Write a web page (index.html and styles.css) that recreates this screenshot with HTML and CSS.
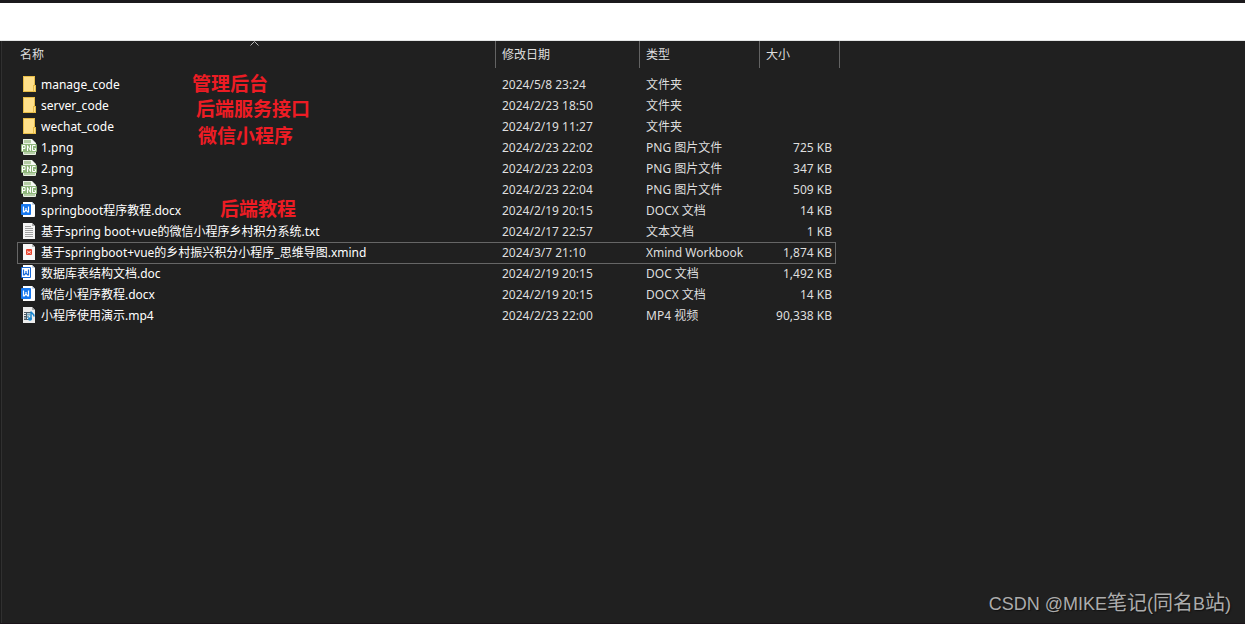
FILE: index.html
```html
<!DOCTYPE html>
<html lang="zh-CN">
<head>
<meta charset="utf-8">
<title>文件列表</title>
<link rel="stylesheet" href="styles.css">
</head>
<body>
<svg class="sprite" aria-hidden="true">
  <symbol id="folder" viewBox="0 0 16 16">
    <path d="M2 0h12v9h1v7H2z" fill="#e8bd48"/><path d="M3 1h10v14H3z" fill="#ffe08a"/><path d="M12 9h1v6h-1z" fill="#e8bd48"/><path d="M13 10h1v5h-1z" fill="#ffe08a"/>
  </symbol>
  <symbol id="png" viewBox="0 0 16 16">
    <path d="M2 0h9l4 4v11a1 1 0 0 1-1 1H3a1 1 0 0 1-1-1z" fill="#e8f0e2"/><path d="M3 1h7v3H3z" fill="#b4cda4"/><path d="M10 0l5 5h-5z" fill="#f7faf5"/>
    <rect x="0" y="5" width="16" height="8" rx="1" fill="#8fb67c"/><path d="M3 13h11v2H3z" fill="#b5cfa7"/>
    <path d="M1.500 12V6.500h2.500v3H1.500M6.500 12V6.500L9.500 11.500V6M14.500 6.500h-3v5h3v-2h-1" fill="none" stroke="#fff"/>
  </symbol>
  <symbol id="docx" viewBox="0 0 16 16">
    <path d="M2 0h9l3 3v11a1 1 0 0 1-1 1H2z" fill="#fff"/><path d="M11 0l3 3h-3z" fill="#c9d9ee"/>
    <rect x="0" y="2" width="10" height="11" rx="1" fill="#1677ef"/>
    <path d="M2.500 4.500v5.500h.8L5 8l1.700 2h.8V4.500M5 6v2" fill="none" stroke="#fff" stroke-width="1.200"/>
  </symbol>
  <symbol id="doc" viewBox="0 0 16 16">
    <path d="M2 0h9l3 3v11a1 1 0 0 1-1 1H2z" fill="#fff"/><path d="M11 0l3 3h-3z" fill="#c9d9ee"/>
    <rect x="0" y="2" width="10" height="11" rx="1" fill="#1769d8"/><rect x="1" y="3" width="8" height="9" fill="#fff"/>
    <path d="M2.500 4.500v5.500h.8L5 8l1.700 2h.8V4.500M5 6v2" fill="none" stroke="#1769d8" stroke-width="1.200"/>
  </symbol>
  <symbol id="txt" viewBox="0 0 16 16">
    <path d="M2 0h9l3 3v13H2z" fill="#f5f5f5"/><path d="M11 0l3 3h-3z" fill="#aaa"/>
    <path d="M4 3.500h6M4 5.500h8M4 7.500h8M4 9.500h8M4 11.500h8M4 13.500h8" stroke="#a2a2a2"/>
  </symbol>
  <symbol id="xmind" viewBox="0 0 16 16">
    <path d="M2 0h9l3 3v13H2z" fill="#f8f8f8"/><path d="M11 0l3 3h-3z" fill="#bbb"/>
    <rect x="5" y="5" width="6" height="6" rx="1" fill="#e9442e"/><path d="M6 7l4 2.500M6 9.500L10 7" fill="none" stroke="#fff" stroke-width=".7"/>
  </symbol>
  <symbol id="mp4" viewBox="0 0 16 16">
    <path d="M2 0h9l3 3v13H2z" fill="#ededed"/><path d="M11 0l3 3h-3z" fill="#aaa"/>
    <path d="M3 5.500h7M3 12.500h5M3 7.500h2M3 9.500h2M3 11h2M5.500 5v8" stroke="#4b5b66"/><path d="M6 7.500h3M6 10h2" stroke="#78a9c4" stroke-width="2"/>
    <path d="M10 12V4.500c0 2 3.500 2 3 5" fill="none" stroke="#1683cc" stroke-width="1.500"/><ellipse cx="9" cy="12" rx="2" ry="1.700" fill="#1683cc"/>
  </symbol>
</svg>
<header class="topbar"></header>
<main class="explorer">
  <table class="files">
    <colgroup><col class="c-name"><col class="c-date"><col class="c-type"><col class="c-size"></colgroup>
    <thead>
      <tr><th class="sorted">名称<svg class="caret" viewBox="0 0 9 5"><path d="M.5 4.500l4-4 4 4" fill="none" stroke="#b5b5b5"/></svg></th><th>修改日期</th><th>类型</th><th>大小</th></tr>
    </thead>
    <tbody>
      <tr><td><span class="file"><svg class="icon"><use href="#folder"/></svg>manage_code</span></td><td>2024/5/8 23:24</td><td>文件夹</td><td></td></tr>
      <tr><td><span class="file"><svg class="icon"><use href="#folder"/></svg>server_code</span></td><td>2024/2/23 18:50</td><td>文件夹</td><td></td></tr>
      <tr><td><span class="file"><svg class="icon"><use href="#folder"/></svg>wechat_code</span></td><td>2024/2/19 11:27</td><td>文件夹</td><td></td></tr>
      <tr><td><span class="file"><svg class="icon"><use href="#png"/></svg>1.png</span></td><td>2024/2/23 22:02</td><td>PNG 图片文件</td><td>725 KB</td></tr>
      <tr><td><span class="file"><svg class="icon"><use href="#png"/></svg>2.png</span></td><td>2024/2/23 22:03</td><td>PNG 图片文件</td><td>347 KB</td></tr>
      <tr><td><span class="file"><svg class="icon"><use href="#png"/></svg>3.png</span></td><td>2024/2/23 22:04</td><td>PNG 图片文件</td><td>509 KB</td></tr>
      <tr><td><span class="file"><svg class="icon"><use href="#docx"/></svg>springboot程序教程.docx</span></td><td>2024/2/19 20:15</td><td>DOCX 文档</td><td>14 KB</td></tr>
      <tr><td><span class="file"><svg class="icon"><use href="#txt"/></svg>基于spring boot+vue的微信小程序乡村积分系统.txt</span></td><td>2024/2/17 22:57</td><td>文本文档</td><td>1 KB</td></tr>
      <tr class="focused"><td><span class="file"><svg class="icon"><use href="#xmind"/></svg>基于springboot+vue的乡村振兴积分小程序_思维导图.xmind</span></td><td>2024/3/7 21:10</td><td>Xmind Workbook</td><td>1,874 KB</td></tr>
      <tr><td><span class="file"><svg class="icon"><use href="#doc"/></svg>数据库表结构文档.doc</span></td><td>2024/2/19 20:15</td><td>DOC 文档</td><td>1,492 KB</td></tr>
      <tr><td><span class="file"><svg class="icon"><use href="#docx"/></svg>微信小程序教程.docx</span></td><td>2024/2/19 20:15</td><td>DOCX 文档</td><td>14 KB</td></tr>
      <tr><td><span class="file"><svg class="icon"><use href="#mp4"/></svg>小程序使用演示.mp4</span></td><td>2024/2/23 22:00</td><td>MP4 视频</td><td>90,338 KB</td></tr>
    </tbody>
  </table>
  <span class="note note-admin">管理后台</span>
  <span class="note note-server">后端服务接口</span>
  <span class="note note-wechat">微信小程序</span>
  <span class="note note-tutorial">后端教程</span>
  <span class="watermark">CSDN @MIKE<span class="cjk">笔记</span>(<span class="cjk">同名</span>B<span class="cjk">站</span>)</span>
</main>
</body>
</html>
```
FILE: styles.css
```css
* { box-sizing: border-box; }
body {
  margin: 0;
  min-height: 100vh;
  display: flex;
  flex-direction: column;
  background: #202020;
  color: #dedede;
  font: 12px/20px "Noto Sans", "Noto Sans CJK SC", sans-serif;
}
.sprite { position: absolute; width: 0; height: 0; }
.topbar {
  height: 41px;
  background: #fff;
  border-top: 3px solid #1b191c;
  border-bottom: 1px solid #e4e6e6;
}
.explorer {
  position: relative;
  flex: 1;
  padding-left: 16px;
  border-left: 1px solid #1b1b1b;
  border-bottom: 1px solid #1a1419;
  box-shadow: inset 1px 0 #303030;
}
.files { border-collapse: separate; border-spacing: 0; table-layout: fixed; width: 823px; }
.c-name { width: 479px; }
.c-date { width: 144px; }
.c-type { width: 120px; }
.c-size { width: 80px; }
th {
  height: 27px;
  padding: 0 0 0 6px;
  border-right: 1px solid #636363;
  font-weight: 400;
  text-align: left;
}
.sorted { position: relative; padding-left: 3px; }
.caret { position: absolute; top: 0; left: 50%; width: 9px; height: 5px; margin-left: -6px; }
tbody::before { content: ""; display: block; height: 6px; }
td { height: 21px; padding: 0 0 0 6px; white-space: nowrap; }
td:first-child { padding-left: 4px; color: #fff; }
td:last-child { padding: 0 8px 0 0; text-align: right; }
.file { display: flex; align-items: flex-start; gap: 4px; }
.icon { width: 16px; height: 16px; margin-top: 1px; }
.focused { position: relative; }
.focused::after {
  content: "";
  position: absolute;
  inset: 0 4px -1px 0;
  border: 1px solid #666;
}
.note {
  position: absolute;
  color: #ed1c24;
  font: 700 19px/24px "Noto Sans CJK SC", sans-serif;
  white-space: nowrap;
}
.note-admin { left: 191px; top: 30px; }
.note-server { left: 195px; top: 55px; }
.note-wechat { left: 197px; top: 82px; }
.note-tutorial { left: 219px; top: 155px; }
.watermark {
  position: absolute;
  right: 14px;
  bottom: 6px;
  color: #acacac;
  font: 18px/26px "Liberation Sans", "Noto Sans CJK SC", sans-serif;
  text-shadow: 1px 1px 1px #111;
}
.cjk { font-size: 20px; }
```
